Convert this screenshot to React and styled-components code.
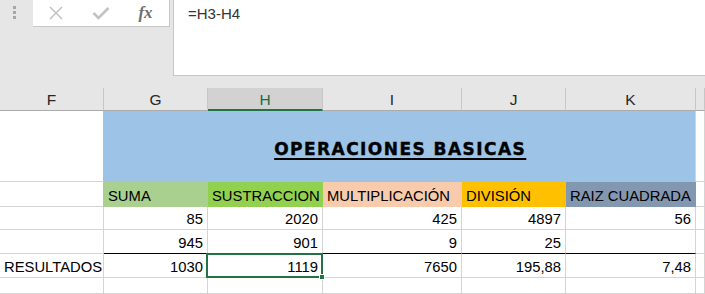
import { createGlobalStyle, styled } from "styled-components"

const GlobalStyle = createGlobalStyle`
  html, body {
    margin: 0;
    padding: 0;
    background: #ffffff;
    overflow: hidden;
  }
  * {
    box-sizing: border-box;
  }
`

const COLUMNS = "104px 104px 115px 139px 104px 130px 1fr"

const Window = styled.div`
  width: 705px;
  height: 294px;
  overflow: hidden;
  font-family: "Liberation Sans", Arial, sans-serif;
  color: #000;
`

const FormulaArea = styled.div`
  display: flex;
  align-items: flex-start;
  height: 88px;
  background: #e6e6e6;
`

const Grip = styled.div`
  display: flex;
  flex-direction: column;
  gap: 2px;
  width: 33px;
  padding: 6px 0 0 13px;
`

const GripDot = styled.span`
  width: 3px;
  height: 3px;
  background: #a6a6a6;
`

const ButtonBox = styled.div`
  display: flex;
  width: 137px;
  height: 27px;
  background: #ffffff;
  border-right: 1px solid #c6c6c6;
  border-bottom: 1px solid #c6c6c6;
`

const IconButton = styled.div`
  display: flex;
  justify-content: center;
  align-items: center;
  width: 45px;
  height: 100%;
`

const FxLabel = styled.span`
  font-family: "Liberation Serif", "Times New Roman", serif;
  font-style: italic;
  font-weight: bold;
  font-size: 17px;
  color: #6e6e6e;
  margin-top: -1px;
`

const FormulaBox = styled.div`
  flex: 1;
  height: 76px;
  margin-left: 3px;
  padding: 5px 0 0 14px;
  background: #ffffff;
  border-left: 1px solid #c6c6c6;
  border-bottom: 1px solid #c6c6c6;
  font-size: 15px;
  color: #333333;
`

const ColumnHeaders = styled.div`
  display: grid;
  grid-template-columns: ${COLUMNS};
  height: 23px;
  background: #e6e6e6;
  border-bottom: 1px solid #ababab;
`

const ColHead = styled.div`
  display: flex;
  justify-content: center;
  align-items: center;
  font-size: 15.5px;
  color: ${props => props.$active ? "#1d6b40" : "#262626"};
  background: ${props => props.$active ? "#d2d2d2" : "transparent"};
  border-right: 1px solid #c6c6c6;
  border-bottom: 2px solid ${props => props.$active ? "#217346" : "transparent"};
  margin-bottom: -1px;
  padding-top: 2px;
`

const Sheet = styled.div`
  display: grid;
  grid-template-columns: ${COLUMNS};
  grid-template-rows: 71px 25px 23px 24px 24px 1fr;
  height: 183px;
`

const Cell = styled.div`
  position: relative;
  display: flex;
  align-items: flex-end;
  justify-content: ${props => props.$right ? "flex-end" : "flex-start"};
  padding: 0 4px 1px;
  line-height: 18px;
  font-size: 14.8px;
  white-space: nowrap;
  background: ${props => props.$fill || "#ffffff"};
  border-right: 1px solid ${props => props.$edge || props.$fill || "#d4d4d4"};
  border-bottom: 1px solid ${props => props.$rule ? "#000000" : (props.$fill || "#d4d4d4")};
`

const TitleCell = styled.div`
  grid-column: span 5;
  display: flex;
  justify-content: center;
  align-items: center;
  padding-top: 5px;
  background: #9dc3e6;
  border-right: 1px solid #d4d4d4;
  border-bottom: 1px solid #9dc3e6;
`

const Title = styled.span`
  font-family: "DejaVu Sans", "Liberation Sans", sans-serif;
  font-weight: bold;
  font-size: 17px;
  line-height: 20px;
  letter-spacing: 1.45px;
  margin-right: -1.45px;
  color: #000;
  -webkit-text-stroke: 0.4px #000;
  text-decoration: underline;
  text-decoration-thickness: 2px;
  text-underline-offset: 3px;
`

const Selection = styled.div`
  position: absolute;
  top: -1px;
  left: -2px;
  right: -1px;
  bottom: -1px;
  border: 2px solid #217346;
  z-index: 2;
  pointer-events: none;
`

const FillHandle = styled.span`
  position: absolute;
  right: -4px;
  bottom: -4px;
  width: 6px;
  height: 6px;
  background: #217346;
  border: 1px solid #ffffff;
`

const headers = [
  { label: "SUMA", fill: "#a9d08e" },
  { label: "SUSTRACCION", fill: "#92d050" },
  { label: "MULTIPLICACIÓN", fill: "#f8cbad" },
  { label: "DIVISIÓN", fill: "#ffc000" },
  { label: "RAIZ CUADRADA", fill: "#8497b0" },
]

const rows = [
  ["85", "2020", "425", "4897", "56"],
  ["945", "901", "9", "25", ""],
]

const results = ["1030", "1119", "7650", "195,88", "7,48"]

function CloseIcon() {
  return (
    <svg width="14" height="14" viewBox="0 0 14 14">
      <path d="M1 1 L13 13 M13 1 L1 13" stroke="#bdbdbd" strokeWidth="1.4" fill="none" />
    </svg>
  )
}

function CheckIcon() {
  return (
    <svg width="18" height="14" viewBox="0 0 18 14">
      <path d="M1.5 7 L6.5 12 L16.5 2" stroke="#c2c2c2" strokeWidth="2.6" fill="none" />
    </svg>
  )
}

export default function App() {
  return (
    <Window>
      <GlobalStyle />
      <FormulaArea>
        <Grip>
          <GripDot />
          <GripDot />
          <GripDot />
        </Grip>
        <ButtonBox>
          <IconButton><CloseIcon /></IconButton>
          <IconButton><CheckIcon /></IconButton>
          <IconButton><FxLabel>fx</FxLabel></IconButton>
        </ButtonBox>
        <FormulaBox>=H3-H4</FormulaBox>
      </FormulaArea>

      <ColumnHeaders>
        {["F", "G", "H", "I", "J", "K", ""].map((c, i) => (
          <ColHead key={i} $active={c === "H"}>{c}</ColHead>
        ))}
      </ColumnHeaders>

      <Sheet>
        <Cell $edge="#9dc3e6" />
        <TitleCell>
          <Title>OPERACIONES BASICAS</Title>
        </TitleCell>
        <Cell />

        <Cell $edge="#a9d08e" />
        {headers.map(h => (
          <Cell key={h.label} $fill={h.fill}>{h.label}</Cell>
        ))}
        <Cell />

        {rows.map((row, r) => (
          [
            <Cell key={"f" + r} />,
            ...row.map((v, i) => (
              <Cell key={r + "-" + i} $right $rule={r === 1}>{v}</Cell>
            )),
            <Cell key={"l" + r} />,
          ]
        ))}

        <Cell>RESULTADOS</Cell>
        {results.map((v, i) => (
          <Cell key={"res" + i} $right>
            {v}
            {i === 1 && (
              <Selection>
                <FillHandle />
              </Selection>
            )}
          </Cell>
        ))}
        <Cell />

        {Array.from({ length: 7 }).map((_, i) => (
          <Cell key={"e" + i} />
        ))}
      </Sheet>
    </Window>
  )
}
